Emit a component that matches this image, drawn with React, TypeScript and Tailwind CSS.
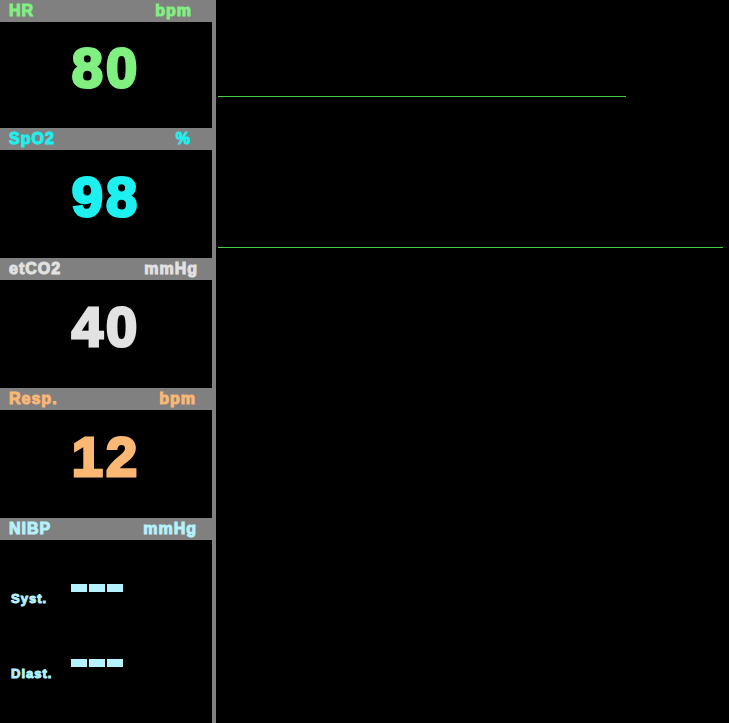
import React from "react";

type Param = {
  label: string;
  unit: string;
  value: string;
  color: string;
  unitPad: string;
  body: string;
};

const params: Param[] = [
  { label: "HR", unit: "bpm", value: "80", color: "text-[#80f080]", unitPad: "pr-[24px]", body: "h-[106px]" },
  { label: "SpO2", unit: "%", value: "98", color: "text-[#1ef0f0]", unitPad: "pr-[25px]", body: "h-[108px]" },
  { label: "etCO2", unit: "mmHg", value: "40", color: "text-[#e2e2e2]", unitPad: "pr-[18px]", body: "h-[108px]" },
  { label: "Resp.", unit: "bpm", value: "12", color: "text-[#fbb874]", unitPad: "pr-[20px]", body: "h-[108px]" },
];

const heavy = "font-bold tracking-[1px] [-webkit-text-stroke:1px_currentColor]";

function Header({ label, unit, color, unitPad }: { label: string; unit: string; color: string; unitPad: string }) {
  return (
    <div className={`flex h-[22px] items-center justify-between bg-[#808080] pl-[9px] ${unitPad} text-[16px] leading-none ${heavy} ${color}`}>
      <span>{label}</span>
      <span>{unit}</span>
    </div>
  );
}

function Dashes() {
  return (
    <div className="flex gap-[2px]">
      <div className="h-[8px] w-[16px] bg-[#b4f2ff]" />
      <div className="h-[8px] w-[16px] bg-[#b4f2ff]" />
      <div className="h-[8px] w-[16px] bg-[#b4f2ff]" />
    </div>
  );
}

export default function App() {
  return (
    <div className="flex h-[723px] w-[729px] overflow-hidden bg-black font-['Liberation_Sans',Arial,sans-serif]">
      <div className="flex w-[216px] shrink-0 flex-col">
        {params.map((p) => (
          <div key={p.label} className="flex flex-col">
            <Header label={p.label} unit={p.unit} color={p.color} unitPad={p.unitPad} />
            <div className={`flex ${p.body} items-center justify-center border-r-4 border-[#808080] bg-black pb-[14px]`}>
              <span className={`text-[56px] leading-none tracking-[3px] [-webkit-text-stroke:3px_currentColor] font-bold ${p.color}`}>
                {p.value}
              </span>
            </div>
          </div>
        ))}
        <Header label="NIBP" unit="mmHg" color="text-[#b4f2ff]" unitPad="pr-[19px]" />
        <div className="flex flex-1 flex-col border-r-4 border-[#808080] bg-black pl-[11px] pt-[44px] text-[#b4f2ff]">
          <div className="flex items-start">
            <span className={`mt-[8px] w-[60px] text-[13px] leading-none ${heavy}`}>Syst.</span>
            <Dashes />
          </div>
          <div className="mt-[54px] flex items-start">
            <span className={`mt-[8px] w-[60px] text-[13px] leading-none ${heavy}`}>Diast.</span>
            <Dashes />
          </div>
        </div>
      </div>
      <div className="flex flex-1 flex-col pl-[2px] pt-[96px]">
        <div className="h-px w-[408px] bg-[#44cc44]" />
        <div className="mt-[150px] h-px w-[505px] bg-[#44cc44]" />
      </div>
    </div>
  );
}
